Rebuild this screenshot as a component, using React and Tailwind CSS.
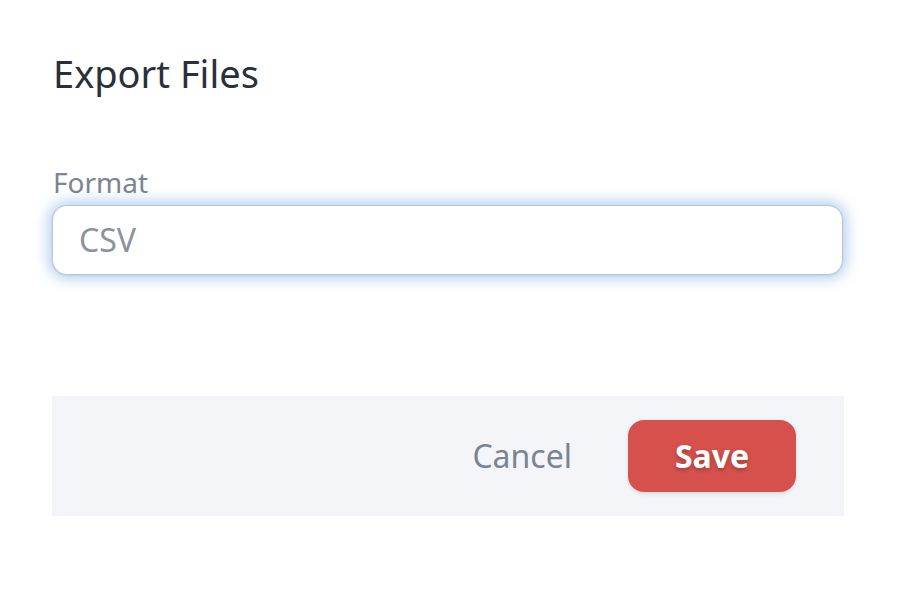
export default function App() {
  return (
    <div className="w-[906px] h-[610px] bg-white font-['Noto_Sans',sans-serif]">
      <div className="pt-[46px] pl-[52px] w-[844px]">
        <h2 className="text-[38px] leading-[54px] text-[#2a303b] pl-[1px]">Export Files</h2>

        <label className="block mt-[62px] text-[28px] leading-[40px] text-[#7b848f] pl-[1px]">Format</label>
        <div className="mt-[4px] ml-[1px] mr-[2px] h-[68px] rounded-[14px] bg-white flex items-center px-[26px] text-[32px] text-[#8b939e] shadow-[0_0_0_1px_#b6c6d8,0_1px_3px_rgba(0,0,0,0.12),0_0_14px_5px_rgba(96,158,222,0.45)]">
          CSV
        </div>

        <div className="mt-[122px] h-[120px] bg-[#f4f5f9] flex items-center justify-end pr-[48px] gap-[56px]">
          <button className="text-[32px] text-[#7b8490]">Cancel</button>
          <button className="w-[168px] h-[72px] rounded-[16px] bg-[#d6514c] text-white font-bold text-[32px] shadow-[0_2px_4px_rgba(0,0,0,0.1)] [text-shadow:0_2px_4px_rgba(0,0,0,0.25)]">
            Save
          </button>
        </div>
      </div>
    </div>
  );
}
